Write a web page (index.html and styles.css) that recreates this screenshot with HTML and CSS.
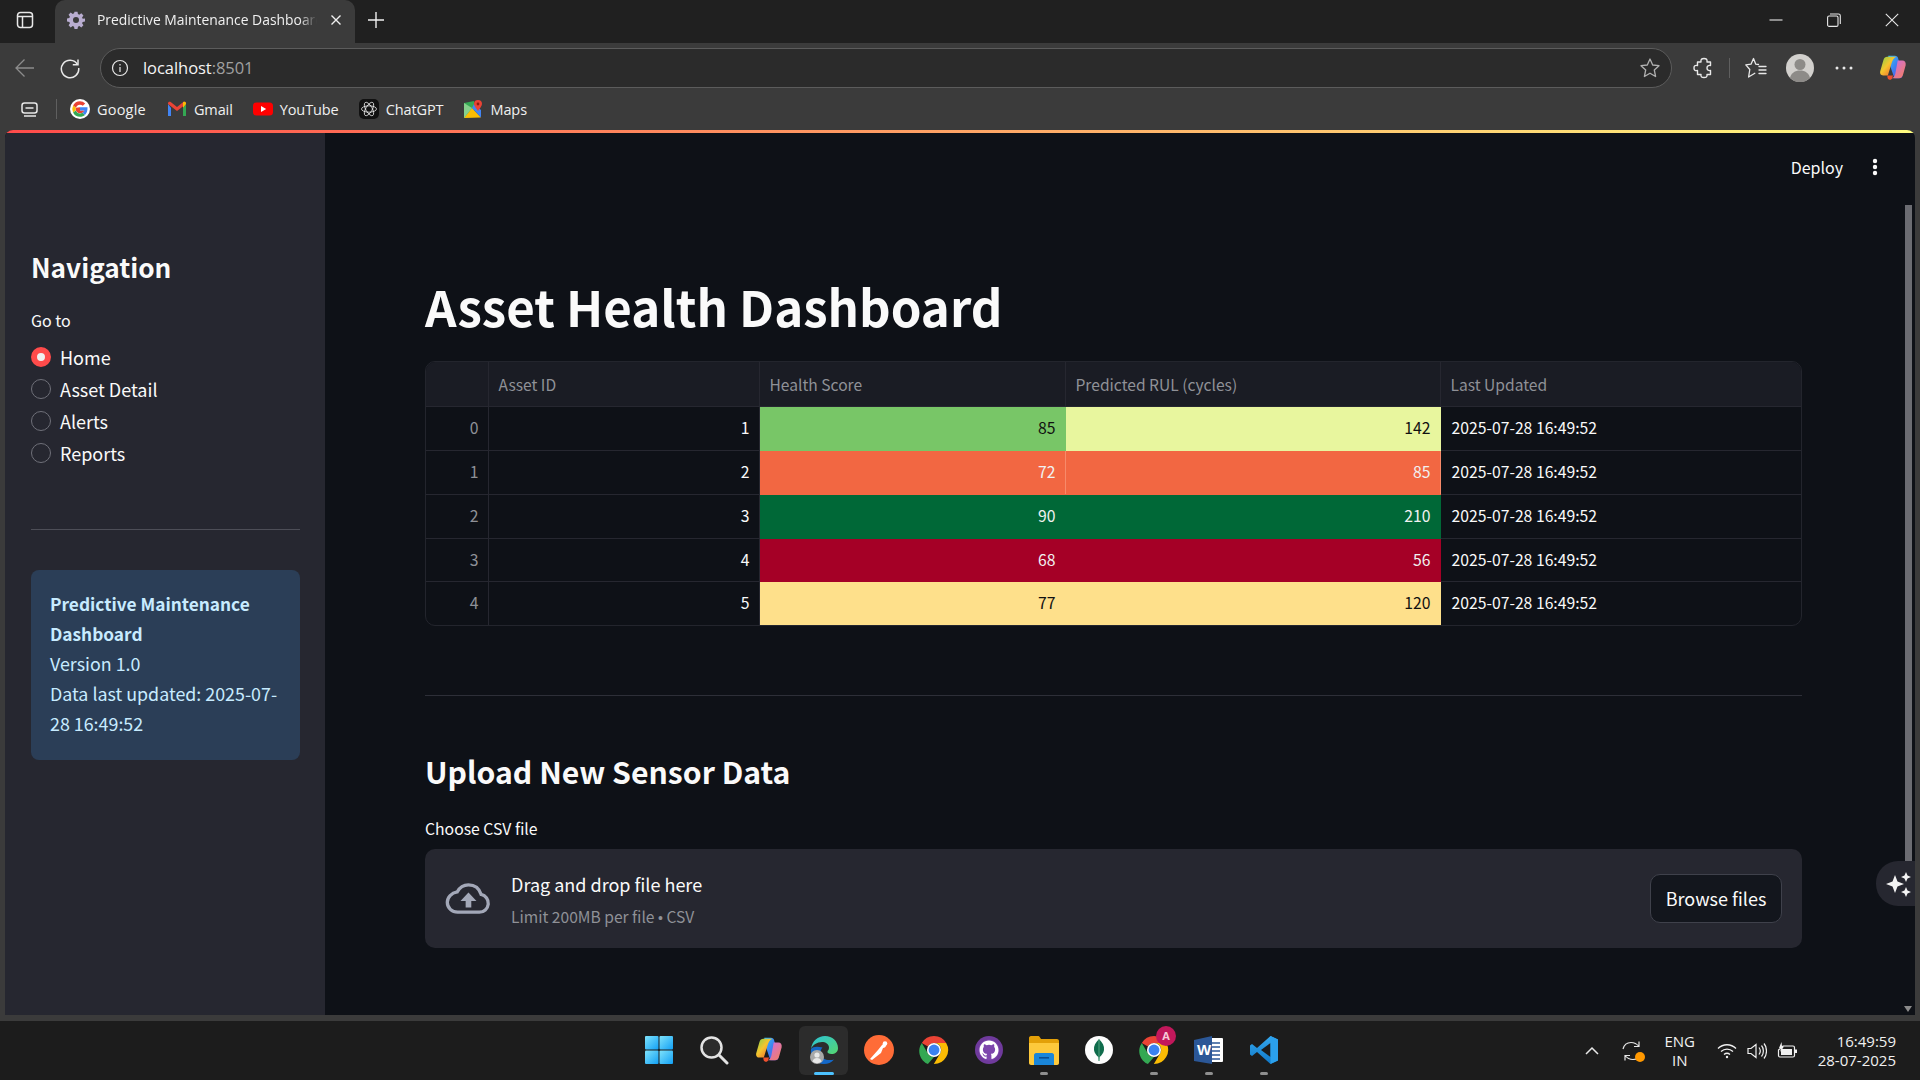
FILE: index.html
```html
<!DOCTYPE html>
<html lang="en">
<head>
  <meta charset="UTF-8">
  <meta name="viewport" content="width=device-width, initial-scale=1.0">
  <title>Predictive Maintenance Dashboard</title>
  <link rel="stylesheet" href="styles.css">
</head>
<body>
  <svg class="icon-defs" width="0" height="0">
    <defs>
      <linearGradient id="cop-a" x1="0" y1="0" x2="1" y2="1"><stop offset="0" stop-color="#35c4f5"/><stop offset=".5" stop-color="#3f7df0"/><stop offset="1" stop-color="#7a4fe0"/></linearGradient>
      <linearGradient id="cop-b" x1="0" y1="0" x2="1" y2="1"><stop offset="0" stop-color="#7fd14a"/><stop offset=".45" stop-color="#f5c52e"/><stop offset="1" stop-color="#f0512e"/></linearGradient>
      <linearGradient id="cop-c" x1="0" y1="0" x2="1" y2="1"><stop offset="0" stop-color="#c86cf0"/><stop offset="1" stop-color="#f77f5a"/></linearGradient>
      <linearGradient id="edge-a" x1="0" y1="0" x2="1" y2="1"><stop offset="0" stop-color="#2bc3d8"/><stop offset="1" stop-color="#56d66f"/></linearGradient>
      <linearGradient id="win-a" x1="0" y1="0" x2="1" y2="1"><stop offset="0" stop-color="#7fe3fb"/><stop offset="1" stop-color="#12a0f5"/></linearGradient>
      <linearGradient id="vs-a" x1="0" y1="0" x2="0" y2="1"><stop offset="0" stop-color="#35a8ee"/><stop offset="1" stop-color="#0f78c8"/></linearGradient>
      <symbol id="copilot" viewBox="0 0 32 32">
        <path d="M11 3h7c2 0 3 1 3.600 3L26 22c.8 3-1 5-3.500 5h-5L11 8z" fill="url(#cop-a)"/>
        <path d="M10 4c-2 0-3.500 1-4.200 3.500L2.500 19c-.9 3 .6 5 3 5h5l4-13c.8-3 2.500-6 5-7z" fill="url(#cop-b)"/>
        <path d="M21 8h5c2.500 0 4 2 3.500 5l-2.500 9c-.8 3-2.500 5-5 5h-9c3 0 4.800-2 5.500-5z" fill="url(#cop-c)"/>
        <path d="M10 24h6l-1 3c-.5 1.500-2 2-3.500 1.200C10 27.500 10 25.500 10 24z" fill="#f0512e"/>
      </symbol>
      <symbol id="chrome" viewBox="0 0 32 32">
        <path d="M16 1a15 15 0 0 1 13 7.500H16a7.500 7.500 0 0 0-6.500 3.750L3 8.500A15 15 0 0 1 16 1z" fill="#ea4335"/>
        <path d="M3 8.500l6.500 11.250A7.500 7.500 0 0 0 16 23.500L9.500 31A15 15 0 0 1 3 8.500z" fill="#34a853"/>
        <path d="M29 8.500A15 15 0 0 1 16 31h-.2l6.700-11.250A7.500 7.500 0 0 0 22.500 12 7.500 7.500 0 0 0 16 8.500z" fill="#fbbc04"/>
        <circle cx="16" cy="16" r="7.500" fill="#fff"/>
        <circle cx="16" cy="16" r="5.800" fill="#3b82f0"/>
      </symbol>
    </defs>
  </svg>

  <div class="tab-strip">
    <svg class="win-toggle" width="24" height="24" viewBox="0 0 24 24" fill="none" stroke="#e8e8e8" stroke-width="1.500"><rect x="4.500" y="4.500" width="15" height="15" rx="3"/><path d="M4.500 8.500h15M9.500 8.500v11"/></svg>
    <div class="tab">
      <svg class="tab-gear" width="18" height="18" viewBox="0 0 24 24"><path fill="#b9add0" fill-rule="evenodd" d="M10 1h4l.6 3.100 1.800.8 2.700-1.800 2.800 2.800-1.800 2.700.8 1.800L24 10v4l-3.100.6-.8 1.800 1.800 2.700-2.800 2.800-2.700-1.800-1.800.8L14 24h-4l-.6-3.100-1.800-.8-2.700 1.800-2.800-2.800 1.800-2.700-.8-1.800L0 14v-4l3.100-.6.800-1.800-1.800-2.700 2.800-2.800 2.700 1.800 1.800-.8zM12 8a4 4 0 1 0 0 8 4 4 0 0 0 0-8z"/></svg>
      <span class="tab-title">Predictive Maintenance Dashboard</span>
      <svg class="tab-close" width="12" height="12" viewBox="0 0 12 12" stroke="#f0f0f0" stroke-width="1.400"><path d="M1.500 1.500l9 9M10.500 1.500l-9 9"/></svg>
    </div>
    <svg class="new-tab" width="20" height="20" viewBox="0 0 20 20" stroke="#f0f0f0" stroke-width="1.400"><path d="M10 2v16M2 10h16"/></svg>
    <div class="win-controls">
      <svg width="14" height="14" viewBox="0 0 14 14" stroke="#e8e8e8" stroke-width="1.100"><path d="M.5 7h13"/></svg>
      <svg width="14" height="14" viewBox="0 0 14 14" fill="none" stroke="#e8e8e8" stroke-width="1.100"><rect x=".6" y="3" width="10.400" height="10.400" rx="1.500"/><path d="M3 1h8.500A1.800 1.800 0 0 1 13.300 2.800V11"/></svg>
      <svg width="14" height="14" viewBox="0 0 14 14" stroke="#e8e8e8" stroke-width="1.100"><path d="M.8.800l12.400 12.400M13.200.8L.8 13.200"/></svg>
    </div>
  </div>

  <div class="toolbar">
    <svg class="tool-back" width="22" height="22" viewBox="0 0 22 22" fill="none" stroke="#8c8c8c" stroke-width="1.300"><path d="M20 11H2M10.500 2.500L2 11l8.500 8.500"/></svg>
    <svg class="tool-reload" width="22" height="22" viewBox="0 0 22 22" fill="none" stroke="#e8e8e8" stroke-width="1.500"><path d="M18.500 7.500A8.700 8.700 0 1 0 19.700 11"/><path d="M19 2.500v5.200h-5.200"/></svg>
    <div class="address-bar">
      <svg class="addr-info" width="18" height="18" viewBox="0 0 18 18" fill="none" stroke="#e8e8e8" stroke-width="1.200"><circle cx="9" cy="9" r="7.500"/><path d="M9 8v5M9 5v1.400"/></svg>
      <span class="addr-host">localhost<span class="addr-port">:8501</span></span>
      <svg class="addr-star" width="22" height="22" viewBox="0 0 22 22" fill="none" stroke="#b0b0b0" stroke-width="1.300" stroke-linejoin="round"><path d="M11 2l2.700 6 6.300.7-4.700 4.300 1.300 6.500-5.600-3.300-5.600 3.300 1.300-6.500L2 8.700 8.300 8z"/></svg>
    </div>
    <div class="tool-right">
      <svg class="tool-ext" width="22" height="22" viewBox="0 0 22 22" fill="none" stroke="#e8e8e8" stroke-width="1.400" stroke-linejoin="round"><path d="M8 5C7.500 2 9 1.500 11 1.500S14.500 2 14 5h3.500v3.500C15 8 14 9.500 14 11s1 3 3.500 2.500v4H14c.5 2.500-1 3-3 3s-3.500-.5-3-3H4.500v-4C2 14 1 13 1 11s1-3 3.500-2.500V5z"/></svg>
      <span class="tool-sep"></span>
      <svg class="tool-fav" width="22" height="22" viewBox="0 0 22 22" fill="none" stroke="#e8e8e8" stroke-width="1.300" stroke-linejoin="round" stroke-linecap="round"><path d="M13.500 7.500L10.800 7.200 8.500 1.500 6 7.200.8 7.900l4 4.600L3.600 20l6.200-3.700"/><path d="M14 9.500h7M14 13h7M14 16.500h7"/></svg>
      <svg class="tool-avatar" width="28" height="28" viewBox="0 0 28 28"><circle cx="14" cy="14" r="14" fill="#d2d0cd"/><circle cx="14" cy="10.500" r="5.500" fill="#8d8b88"/><path d="M4 24c1-5 5-7.500 10-7.500s9 2.500 10 7.500a14 14 0 0 1-20 0z" fill="#8d8b88"/></svg>
      <svg class="tool-more" width="18" height="4" viewBox="0 0 18 4" fill="#e8e8e8"><circle cx="2" cy="2" r="1.500"/><circle cx="9" cy="2" r="1.500"/><circle cx="16" cy="2" r="1.500"/></svg>
      <svg class="tool-copilot" width="30" height="30"><use href="#copilot"/></svg>
    </div>
  </div>

  <div class="bookmarks">
    <svg class="bm-tabs" width="20" height="18" viewBox="0 0 20 18" fill="none" stroke="#e8e8e8" stroke-width="1.500"><rect x="2" y="3" width="15" height="10" rx="2.500"/><path d="M5.500 8h8M4 16h12" /></svg>
    <span class="bm-sep"></span>
    <a class="bm-item bm-google">
      <svg width="20" height="20" viewBox="0 0 20 20"><circle cx="10" cy="10" r="10" fill="#fff"/><path d="M10 8.300v3.300h4.300c-.4 1.700-2 2.700-4.300 2.700a4.300 4.300 0 0 1 0-8.600c1.100 0 2 .4 2.800 1.100l2.400-2.400A7.700 7.700 0 0 0 10 2.300 7.700 7.700 0 0 0 3.100 6.600l2.700 2.100" fill="#ea4335"/><path d="M3.100 6.600a7.700 7.700 0 0 0 0 6.800l2.800-2.100a4.300 4.300 0 0 1 0-2.600z" fill="#fbbc04"/><path d="M3.100 13.400A7.700 7.700 0 0 0 10 17.700c2 0 3.700-.6 5-1.800l-2.700-2.100c-.6.400-1.400.6-2.300.6a4.300 4.300 0 0 1-4.100-3z" fill="#34a853"/><path d="M17.500 8.300H10v3.300h4.300c-.2.900-.8 1.700-2 2.200l2.700 2.100c1.600-1.500 2.700-3.700 2.500-7.600z" fill="#4285f4"/></svg>
      Google
    </a>
    <a class="bm-item">
      <svg width="20" height="20" viewBox="0 0 20 20"><path d="M1 5v12h3V9z" fill="#4285f4"/><path d="M16 9v8h3V5z" fill="#34a853"/><path d="M1 5l9 7 9-7v-.5C19 3 17.500 2.300 16 3.300L10 8 4 3.300C2.500 2.300 1 3 1 4.500z" fill="#ea4335"/><path d="M16 3.300V9l3-4v-.5c0-1.500-1.500-2.200-3-1.200z" fill="#fbbc04"/></svg>
      Gmail
    </a>
    <a class="bm-item">
      <svg width="20" height="20" viewBox="0 0 20 20"><rect y="3.500" width="20" height="13" rx="3.500" fill="#f00"/><path d="M8 7l5.200 3L8 13z" fill="#fff"/></svg>
      YouTube
    </a>
    <a class="bm-item">
      <svg width="20" height="20" viewBox="0 0 20 20"><rect width="20" height="20" rx="5" fill="#111"/><g fill="none" stroke="#e8e8e8" stroke-width=".8"><ellipse cx="10" cy="10" rx="7.500" ry="3.200"/><ellipse cx="10" cy="10" rx="7.500" ry="3.200" transform="rotate(60 10 10)"/><ellipse cx="10" cy="10" rx="7.500" ry="3.200" transform="rotate(120 10 10)"/></g></svg>
      ChatGPT
    </a>
    <a class="bm-item">
      <svg width="20" height="20" viewBox="0 0 20 20"><path d="M1 4l10-2v16l-10 1z" fill="#34a853"/><path d="M1 19L9 9l9 9.500z" fill="#fbbc04"/><path d="M9 9l9 9.500V11L11 5z" fill="#4285f4"/><path d="M1 4l8 5-8 10z" fill="#86d08c"/><path d="M15 1a4 4 0 0 1 4 4c0 2.500-3 5-4 7-1-2-4-4.500-4-7a4 4 0 0 1 4-4z" fill="#ea4335"/><circle cx="15" cy="5" r="1.400" fill="#8c1c13"/></svg>
      Maps
    </a>
  </div>

  <div class="page">
    <div class="top-gradient"></div>
    <div class="page-body">
      <aside class="sidebar">
        <h2 class="nav-title">Navigation</h2>
        <div class="nav-label">Go to</div>
        <div class="radio-list">
          <div class="radio-row"><span class="radio radio-on"></span>Home</div>
          <div class="radio-row"><span class="radio"></span>Asset Detail</div>
          <div class="radio-row"><span class="radio"></span>Alerts</div>
          <div class="radio-row"><span class="radio"></span>Reports</div>
        </div>
        <hr class="side-rule">
        <div class="info-box">
          <strong>Predictive Maintenance Dashboard</strong><br>
          Version 1.0<br>
          Data last updated: 2025-07-28 16:49:52
        </div>
      </aside>

      <main class="main">
        <div class="app-header">
          <span class="deploy">Deploy</span>
          <svg class="kebab" width="6" height="18" viewBox="0 0 6 18" fill="#fafafa"><circle cx="3" cy="3" r="2.200"/><circle cx="3" cy="9" r="2.200"/><circle cx="3" cy="15" r="2.200"/></svg>
        </div>
        <h1 class="page-title">Asset Health Dashboard</h1>

        <div class="table-wrap">
          <table class="data-table">
            <colgroup>
              <col class="col-idx"><col class="col-id"><col class="col-health"><col class="col-rul"><col>
            </colgroup>
            <thead>
              <tr><th></th><th>Asset ID</th><th>Health Score</th><th>Predicted RUL (cycles)</th><th>Last Updated</th></tr>
            </thead>
            <tbody>
              <tr><td class="idx">0</td><td class="num">1</td><td class="num heat-green">85</td><td class="num heat-lime">142</td><td>2025-07-28 16:49:52</td></tr>
              <tr><td class="idx">1</td><td class="num">2</td><td class="num heat-orange">72</td><td class="num heat-orange">85</td><td>2025-07-28 16:49:52</td></tr>
              <tr><td class="idx">2</td><td class="num">3</td><td class="num heat-dark">90</td><td class="num heat-dark">210</td><td>2025-07-28 16:49:52</td></tr>
              <tr class="row-short"><td class="idx">3</td><td class="num">4</td><td class="num heat-red">68</td><td class="num heat-red">56</td><td>2025-07-28 16:49:52</td></tr>
              <tr><td class="idx">4</td><td class="num">5</td><td class="num heat-sand">77</td><td class="num heat-sand">120</td><td>2025-07-28 16:49:52</td></tr>
            </tbody>
          </table>
        </div>

        <hr class="main-rule">
        <h2 class="section-title">Upload New Sensor Data</h2>
        <div class="upload-label">Choose CSV file</div>
        <div class="dropzone">
          <svg class="cloud" width="46" height="32" viewBox="0 0 48 34"><path fill="none" stroke="#a3a8b8" stroke-width="3.500" d="M13 31h23a9.500 9.500 0 0 0 2-18.800C36 6 31 2 24.500 2c-5.500 0-9.500 3-12 7.500C6.500 10.500 2 15 2 20.500 2 26.500 7 31 13 31z"/><path fill="#a3a8b8" d="M24.500 10l8.500 9h-5.500v7h-6v-7H16z"/></svg>
          <div class="drop-text">
            <div class="drop-main">Drag and drop file here</div>
            <div class="drop-sub">Limit 200MB per file <span class="drop-dot">•</span> CSV</div>
          </div>
          <button class="browse-btn">Browse files</button>
        </div>
      </main>
    </div>

    <div class="scrollbar-thumb"></div>
    <div class="scrollbar-arrow"></div>
    <div class="ai-button">
      <svg width="30" height="30" viewBox="0 0 30 30" fill="#f4f4f4"><path d="M11 6l2.500 6.500L20 15l-6.500 2.500L11 24l-2.500-6.500L2 15l6.500-2.500z"/><path d="M22 3l1.500 3.500L27 8l-3.500 1.500L22 13l-1.500-3.500L17 8l3.500-1.500z"/><path d="M22 18l1.500 3.500L27 23l-3.500 1.500L22 28l-1.500-3.500L17 23l3.500-1.500z"/></svg>
    </div>
  </div>

  <footer class="taskbar">
    <div class="task-icons">
      <div class="task-item"><svg width="30" height="30" viewBox="0 0 30 30" fill="url(#win-a)"><rect x="1" y="1" width="13.500" height="13.500" rx="1"/><rect x="15.500" y="1" width="13.500" height="13.500" rx="1"/><rect x="1" y="15.500" width="13.500" height="13.500" rx="1"/><rect x="15.500" y="15.500" width="13.500" height="13.500" rx="1"/></svg></div>
      <div class="task-item"><svg width="30" height="30" viewBox="0 0 30 30" fill="none"><circle cx="12.500" cy="12.500" r="10" fill="#2c2c2c" stroke="#e3e3e3" stroke-width="2.500"/><path d="M20 20l8 8" stroke="#e3e3e3" stroke-width="3" stroke-linecap="round"/></svg></div>
      <div class="task-item"><svg width="30" height="30"><use href="#copilot"/></svg></div>
      <div class="task-item task-active">
        <svg width="30" height="30" viewBox="0 0 30 30"><path d="M2 14C3 6 9 1 16 1c7.500 0 13 5.500 13 12 0 4-3 6-6.500 6-2.500 0-4.500-1-4-2.500.5-1.500 1.500-1.500 1.500-4C20 9 16.500 7 13 7 8 7 3.500 10 2 14z" fill="url(#edge-a)"/><path d="M2 14c-1 8 5 15 13 15 4 0 7.500-1.500 10-4.500-3 1-8 1-11-1.500-3-3-3-8-.5-10.500C8 11 4 11.500 2 14z" fill="#1468c8"/><circle cx="8" cy="22" r="7" fill="#a8a8a8"/><circle cx="8" cy="20" r="2.600" fill="#e8e8e8"/><path d="M3.500 26.500c.5-2.500 2.500-3.500 4.500-3.500s4 1 4.500 3.500a7 7 0 0 1-9 0z" fill="#e8e8e8"/></svg>
        <span class="task-pill pill-active"></span>
      </div>
      <div class="task-item"><svg width="30" height="30" viewBox="0 0 30 30"><circle cx="15" cy="15" r="15" fill="#ff6c37"/><path d="M6 24l8-9 3 3-9 7zM14 15l4-5c1.500-2 4-1.500 4 .5 0 1.500-1.500 2.500-3 2.500L17 18z" fill="#fff"/><circle cx="21" cy="8.500" r="2.300" fill="#fff"/></svg></div>
      <div class="task-item"><svg width="30" height="30"><use href="#chrome"/></svg></div>
      <div class="task-item"><svg width="30" height="30" viewBox="0 0 30 30"><circle cx="15" cy="15" r="14" fill="#6f3a9c"/><circle cx="15" cy="15" r="10.500" fill="#7d46ad"/><path fill="#fff" d="M15 5.500c-5.300 0-9.500 4.200-9.500 9.500 0 4.200 2.700 7.800 6.500 9 .5.100.6-.2.600-.5v-2c-2.600.6-3.200-1.100-3.200-1.100-.4-1.100-1-1.400-1-1.400-.9-.6 0-.6 0-.6.900 0 1.500 1 1.500 1 .8 1.400 2.200 1 2.700.8.100-.6.300-1 .6-1.200-2.100-.2-4.300-1-4.300-4.700 0-1 .4-1.900 1-2.600-.1-.2-.4-1.200.1-2.500 0 0 .8-.3 2.600 1a9 9 0 0 1 4.800 0c1.800-1.300 2.600-1 2.600-1 .5 1.300.2 2.300.1 2.500.6.700 1 1.600 1 2.600 0 3.700-2.200 4.500-4.300 4.700.3.300.6.800.6 1.600v3c0 .3.200.6.600.5 3.800-1.200 6.500-4.800 6.500-9 0-5.300-4.200-9.500-9.500-9.500z"/></svg></div>
      <div class="task-item">
        <svg width="30" height="30" viewBox="0 0 30 30"><path d="M0 3c0-1 .6-2 2-2h7c1 0 1.500.5 2 1.500L12 4h16c1 0 2 .8 2 2v3H0z" fill="#e3a008"/><path d="M0 8h30v20c0 1-.8 2-2 2H2c-1 0-2-.8-2-2z" fill="#fdc93c"/><path d="M5 20c0-1 1-2 2-2h16c1 0 2 1 2 2v10H5z" fill="#1a86d9"/><rect x="10" y="22" width="10" height="1.600" fill="#0c4f92"/></svg>
        <span class="task-pill"></span>
      </div>
      <div class="task-item"><svg width="30" height="30" viewBox="0 0 30 30"><circle cx="15" cy="15" r="14" fill="#fdfdfd"/><path d="M15 4c3.500 3.500 5.500 7 5 11-.4 3-2.500 5.500-4.300 7L15.400 26h-.8l-.3-4C12.500 20.500 10.400 18 10 15c-.5-4 1.500-7.500 5-11z" fill="#0f6b4b"/><path d="M15 4v22" stroke="#7fc9a6" stroke-width=".6"/></svg></div>
      <div class="task-item">
        <svg width="30" height="30"><use href="#chrome"/></svg>
        <span class="chrome-badge">A</span>
        <span class="task-pill"></span>
      </div>
      <div class="task-item">
        <svg width="30" height="30" viewBox="0 0 30 30"><rect x="11" y="3" width="18" height="24" rx="1" fill="#fff"/><path d="M15 8h11M15 12h11M15 16h11M15 20h11M15 24h11" stroke="#2b5797" stroke-width="1.500"/><path d="M0 5l18-4v28L0 26z" fill="#2b5797"/><text class="word-w" x="3" y="20">W</text></svg>
        <span class="task-pill"></span>
      </div>
      <div class="task-item">
        <svg width="30" height="30" viewBox="0 0 30 30"><path d="M21.500 1L29 4.500v21L21.500 29 8 17l-5 4-2-1.500V10.500L3 9l5 4z" fill="url(#vs-a)"/><path d="M21.500 8L12 15l9.500 7z" fill="#1c1c1c"/><path d="M21.500 1L29 4.500v21L21.500 29z" fill="#2ba0ec"/></svg>
        <span class="task-pill"></span>
      </div>
    </div>
    <div class="tray">
      <svg class="tray-chevron" width="16" height="10" viewBox="0 0 16 10" fill="none" stroke="#e8e8e8" stroke-width="1.500"><path d="M2 8l6-6 6 6"/></svg>
      <div class="tray-sync">
        <svg width="22" height="22" viewBox="0 0 22 22" fill="none" stroke="#e8e8e8" stroke-width="1.200"><path d="M2 9c1-4 4-6.500 8-6.500 3 0 6 1.500 8 4M18 1.500v5h-5M20 13c-1 4-4 6.500-8 6.500-3 0-6-1.500-8-4M4 20.500v-5h5"/></svg>
        <span class="sync-dot"></span>
      </div>
      <div class="tray-lang">ENG<br>IN</div>
      <svg class="tray-wifi" width="20" height="16" viewBox="0 0 20 16" fill="none" stroke="#f0f0f0" stroke-width="1.300"><path d="M1 5.500c5-5 13-5 18 0M4 8.500c3.500-3.300 8.500-3.300 12 0M7 11.500c1.800-1.500 4.200-1.500 6 0"/><circle cx="10" cy="14" r="1.200" fill="#f0f0f0" stroke="none"/></svg>
      <svg class="tray-vol" width="20" height="18" viewBox="0 0 20 18" fill="none" stroke="#f0f0f0" stroke-width="1.200"><path d="M1 6.500h3L9 2.500v13l-5-4H1zM12 5.500c1.500 2 1.500 5 0 7M14.500 3.500c2.500 3 2.500 8 0 11M17 1.500c3.300 4 3.300 11 0 15"/></svg>
      <svg class="tray-batt" width="20" height="18" viewBox="0 0 20 18"><path d="M6 4h10c1 0 1.500.6 1.500 1.500v8c0 1-.5 1.500-1.500 1.500H3c-1 0-1.500-.5-1.500-1.500V8z" fill="none" stroke="#f0f0f0" stroke-width="1.200"/><rect x="4" y="7" width="11" height="6" fill="#f0f0f0"/><rect x="18" y="7.500" width="2" height="3.500" fill="#f0f0f0"/><path d="M4.500 0L2 6h2l-.8 4L7 4.500H5z" fill="#f0f0f0"/></svg>
      <div class="tray-clock">16:49:59<br>28-07-2025</div>
    </div>
  </footer>
</body>
</html>
```

FILE: styles.css
```css
/* Page frame */
html,
body {
  height: 100%;
}

body {
  margin: 0;
  height: 1080px;
  overflow: hidden;
  display: flex;
  flex-direction: column;
  background-color: #3b3b3b;
  font-family: "Noto Sans CJK SC", "Noto Sans", sans-serif;
  color: #fafafa;
}

.icon-defs {
  position: absolute;
}

svg {
  display: block;
  flex: none;
}

/* Browser tab strip */
.tab-strip {
  height: 43px;
  flex: none;
  box-sizing: border-box;
  display: flex;
  align-items: center;
  background-color: #202020;
  padding: 0 0 4px 13px;
}

.tab {
  align-self: stretch;
  width: 300px;
  margin: 0 0 -4px 18px;
  padding-bottom: 4px;
  display: flex;
  align-items: center;
  background-color: #3b3b3b;
  border-radius: 10px 10px 0 0;
}

.tab-gear {
  margin-left: 12px;
}

.tab-title {
  width: 220px;
  flex: none;
  margin-left: 12px;
  overflow: hidden;
  white-space: nowrap;
  font: 13.9px "Open Sans", sans-serif;
  color: #f0f0f0;
  -webkit-mask-image: linear-gradient(90deg, #000 92%, transparent);
  mask-image: linear-gradient(90deg, #000 92%, transparent);
}

.tab-close {
  margin-left: 13px;
}

.new-tab {
  margin-left: 11px;
}

.win-controls {
  margin-left: auto;
  display: flex;
  gap: 44px;
  padding-right: 21px;
}

/* Address row */
.toolbar {
  height: 40px;
  flex: none;
  margin-top: 5px;
  display: flex;
  align-items: center;
  padding-left: 14px;
}

.tool-reload {
  margin-left: 23px;
}

.address-bar {
  width: 1572px;
  height: 40px;
  box-sizing: border-box;
  margin-left: 19px;
  display: flex;
  align-items: center;
  background-color: #2b2b2b;
  border: 1px solid #5c5c5c;
  border-radius: 20px;
  padding: 0 10px;
}

.addr-host {
  margin: 0 0 2px 14px;
  font: 16.5px "Open Sans", sans-serif;
  letter-spacing: -0.05px;
  color: #f4f4f4;
}

.addr-port {
  color: #a0a0a0;
}

.addr-star {
  margin-left: auto;
}

.tool-right {
  display: flex;
  align-items: center;
  margin-left: 21px;
}

.tool-sep {
  width: 1px;
  height: 20px;
  margin-left: 14px;
  background-color: #5f5f5f;
}

.tool-fav {
  margin-left: 15px;
}

.tool-avatar {
  margin-left: 19px;
}

.tool-more {
  margin-left: 21px;
}

.tool-copilot {
  margin-left: 25px;
}

/* Bookmarks row */
.bookmarks {
  height: 40px;
  flex: none;
  box-sizing: border-box;
  margin-top: 2px;
  display: flex;
  align-items: center;
  padding: 0 0 2px 20px;
  font: 14.5px "Open Sans", sans-serif;
  letter-spacing: -0.1px;
  color: #f0f0f0;
}

.bm-sep {
  width: 1px;
  height: 20px;
  margin-left: 16px;
  margin-right: 13px;
  background-color: #5f5f5f;
}

.bm-item {
  display: flex;
  align-items: center;
  gap: 7px;
  margin-right: 20px;
}

.bm-google {
  margin-right: 21px;
  letter-spacing: 0.2px;
}

/* Streamlit page */
.page {
  position: relative;
  height: 885px;
  flex: none;
  margin: 0 5px;
  display: flex;
  flex-direction: column;
  overflow: hidden;
  background-color: #0e1117;
  border-radius: 8px 8px 0 0;
}

.top-gradient {
  height: 3px;
  flex: none;
  background: linear-gradient(90deg, #ff4b4b, #fffd80);
}

.page-body {
  flex: 1;
  display: flex;
  min-height: 0;
}

.sidebar {
  width: 320px;
  flex: none;
  box-sizing: border-box;
  background-color: #262730;
  padding: 112px 25px 0 26px;
}

.nav-title {
  margin: 0;
  font-size: 26.2px;
  line-height: 44px;
  font-weight: 700;
}

.nav-label {
  margin-top: 20px;
  font-size: 16px;
  line-height: 22px;
}

.radio-list {
  margin-top: 10px;
  display: flex;
  flex-direction: column;
}

.radio-row {
  height: 32px;
  display: flex;
  align-items: center;
  font-size: 18px;
}

.radio {
  width: 20px;
  height: 20px;
  box-sizing: border-box;
  margin-right: 9px;
  border: 1px solid #6f7079;
  border-radius: 50%;
  background-color: #262730;
}

.radio-on {
  border: 6px solid #ff4b4b;
  background-color: #f0f0f0;
}

.side-rule {
  margin: 60px 0 0;
  border: none;
  border-top: 1px solid #4d4e57;
}

.info-box {
  margin-top: 40px;
  padding: 18px 19px 0;
  height: 190px;
  box-sizing: border-box;
  background-color: #2b3e57;
  border-radius: 8px;
  color: #c7ebff;
  font-size: 17.85px;
  line-height: 30px;
}

.info-box strong {
  font-size: 17.3px;
  line-height: 20px;
}

.main {
  flex: 1;
  min-width: 0;
  display: flex;
  flex-direction: column;
  padding: 0 113px 0 100px;
}

.app-header {
  height: 68px;
  flex: none;
  display: flex;
  align-items: center;
  justify-content: flex-end;
  margin-right: -76px;
  gap: 29px;
  font-size: 16px;
}

.page-title {
  margin: 63px 0 0;
  font-size: 49.2px;
  line-height: 84px;
  font-weight: 700;
}

/* Health table */
.table-wrap {
  margin-top: 13px;
  border: 1px solid #23252d;
  border-radius: 10px;
  overflow: hidden;
}

.data-table {
  width: 100%;
  table-layout: fixed;
  border-collapse: collapse;
  font-size: 15.75px;
}

.col-idx {
  width: 62px;
}

.col-id {
  width: 271px;
}

.col-health {
  width: 306px;
}

.col-rul {
  width: 375px;
}

.data-table th {
  height: 44px;
  padding: 0 10px;
  background-color: #1a1c24;
  border: 1px solid #262730;
  border-top: none;
  text-align: left;
  font-size: 15.6px;
  font-weight: 400;
  color: #8f9197;
}

.data-table td {
  height: 41px;
  padding: 0 9px 2px;
  border: 1px solid #262730;
  white-space: nowrap;
}

.data-table td:last-child {
  padding-left: 11px;
}

.data-table .row-short td {
  height: 40px;
}

.data-table tr > :first-child {
  border-left: none;
}

.data-table tr > :last-child {
  border-right: none;
}

.data-table tbody tr:last-child td {
  border-bottom: none;
}

.data-table .idx {
  text-align: right;
  color: #8f9197;
}

.data-table .num {
  text-align: right;
}

.data-table .heat-green {
  background-color: #78c667;
  border-color: #78c667;
  color: #111;
}

.data-table .heat-lime {
  background-color: #e8f69e;
  border-color: #e8f69e;
  color: #111;
}

.data-table .heat-orange {
  background-color: #f26742;
  border-color: #f26742;
  border-right-color: #f78a6a;
  color: #f1f1f1;
}

.data-table .heat-dark {
  background-color: #006837;
  border-color: #006837;
  color: #f1f1f1;
}

.data-table .heat-red {
  background-color: #a50026;
  border-color: #a50026;
  color: #f1f1f1;
}

.data-table .heat-sand {
  background-color: #fee08b;
  border-color: #fee08b;
  color: #111;
}

.main-rule {
  margin: 69px 0 0;
  border: none;
  border-top: 1px solid #2d2f38;
}

.section-title {
  margin: 52px 0 0;
  font-size: 30.2px;
  line-height: 46px;
  font-weight: 700;
}

.upload-label {
  margin-top: 24px;
  font-size: 15.75px;
  line-height: 22px;
}

.dropzone {
  margin-top: 9px;
  height: 99px;
  flex: none;
  display: flex;
  align-items: center;
  padding: 0 20px;
  background-color: #262730;
  border-radius: 10px;
}

.cloud {
  margin-right: 20px;
}

.drop-text {
  margin-top: 2px;
}

.drop-main {
  font-size: 18px;
  line-height: 26px;
}

.drop-sub {
  margin-top: 8px;
  font-size: 15.6px;
  line-height: 22px;
  color: #8f9197;
}

.drop-dot {
  font-family: "Liberation Sans", sans-serif;
  font-size: 14px;
}

.browse-btn {
  width: 132px;
  height: 49px;
  margin-left: auto;
  padding: 0 0 2px;
  background-color: #13161d;
  border: 1px solid #3f414b;
  border-radius: 10px;
  font: inherit;
  font-size: 18px;
  color: #fafafa;
}

/* Overlays on the page */
.scrollbar-thumb {
  position: absolute;
  top: 75px;
  right: 3px;
  width: 7px;
  height: 656px;
  background-color: #6b6c72;
}

.scrollbar-arrow {
  position: absolute;
  right: 3px;
  bottom: 3px;
  border-left: 4px solid transparent;
  border-right: 4px solid transparent;
  border-top: 6px solid #8a8a8a;
}

.ai-button {
  position: absolute;
  top: 731px;
  right: 0;
  width: 39px;
  height: 45px;
  display: flex;
  align-items: center;
  padding-left: 8px;
  box-sizing: border-box;
  background-color: #262730;
  border-radius: 22px 0 0 22px;
}

/* Windows taskbar */
.taskbar {
  position: relative;
  margin-top: auto;
  height: 59px;
  flex: none;
  display: flex;
  justify-content: center;
  background-color: #1c1c1c;
}

.task-icons {
  display: flex;
  align-items: center;
  gap: 6px;
  margin: 0 0 1px 2px;
}

.task-item {
  position: relative;
  width: 49px;
  height: 49px;
  display: flex;
  align-items: center;
  justify-content: center;
  border-radius: 6px;
}

.task-active {
  background-color: #2c2c2c;
}

.task-pill {
  position: absolute;
  left: 50%;
  bottom: 0;
  width: 8px;
  height: 3px;
  margin-left: -4px;
  border-radius: 2px;
  background-color: #8f8f8f;
}

.pill-active {
  width: 20px;
  margin-left: -10px;
  background-color: #4cc2ff;
}

.chrome-badge {
  position: absolute;
  top: 0;
  right: 2px;
  width: 20px;
  height: 20px;
  display: flex;
  align-items: center;
  justify-content: center;
  border-radius: 50%;
  background-color: #c2185b;
  font: 700 11px "Open Sans", sans-serif;
  color: #f6c9d8;
}

.word-w {
  font: 700 15px "Liberation Sans", sans-serif;
  fill: #fff;
}

.tray {
  position: absolute;
  top: 0;
  right: 24px;
  bottom: 0;
  display: flex;
  align-items: center;
  color: #f0f0f0;
  font: 15px/19px "Open Sans", sans-serif;
}

.tray-sync {
  position: relative;
  margin-left: 21px;
}

.sync-dot {
  position: absolute;
  right: -2px;
  bottom: 0;
  width: 10px;
  height: 10px;
  border-radius: 50%;
  background-color: #ff9800;
}

.tray-lang {
  width: 50px;
  margin-left: 12px;
  text-align: center;
}

.tray-wifi {
  margin-left: 12px;
}

.tray-vol {
  margin-left: 10px;
}

.tray-batt {
  margin-left: 10px;
}

.tray-clock {
  margin-left: 21px;
  text-align: right;
}
```
